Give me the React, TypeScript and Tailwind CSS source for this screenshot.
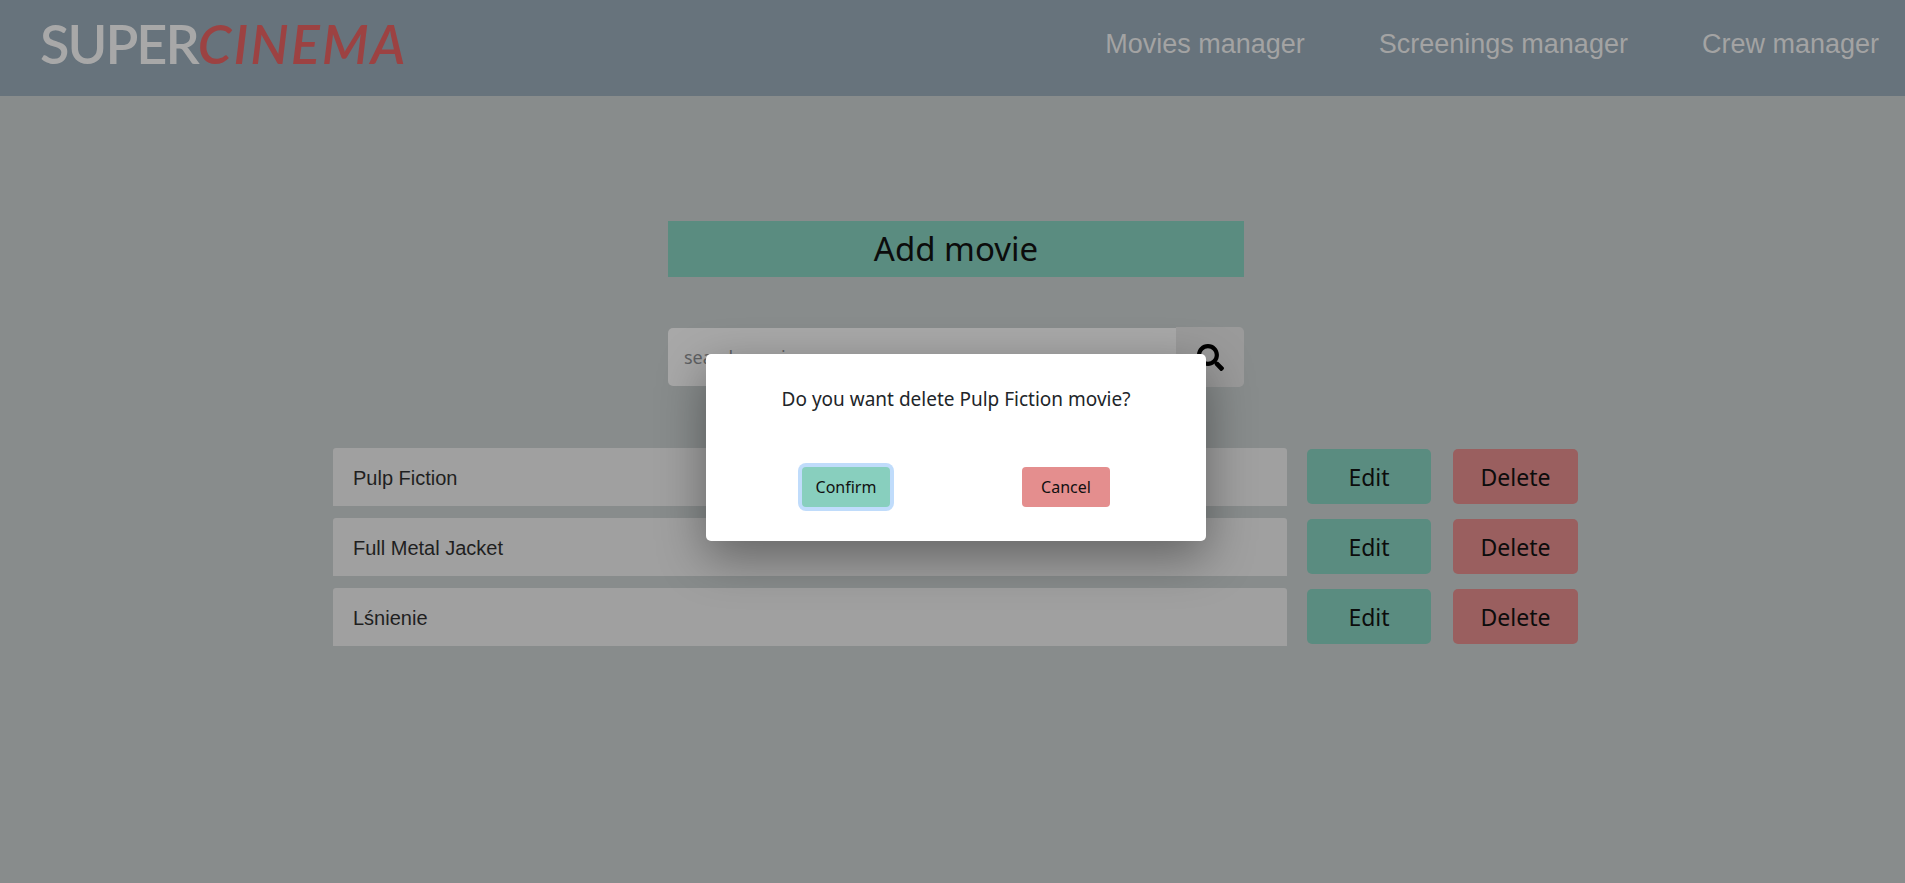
import { FaSearch } from "react-icons/fa"

const movies = ["Pulp Fiction", "Full Metal Jacket", "Lśnienie"]

function MovieRow({ title }: { title: string }) {
  return (
    <div className="flex items-start">
      <div className="flex h-[58px] w-[954px] items-center rounded-t-[3px] bg-[#a0a0a0] pt-[2px] pl-[20px] font-['Liberation_Sans',sans-serif] text-[20px] text-[#1f1f1f]">
        {title}
      </div>
      <button className="mt-px ml-5 h-[55px] w-[124px] rounded-[5px] bg-[#5a8c80] pt-[2px] text-[23px] text-[#0c0c0c]">
        Edit
      </button>
      <button className="mt-px ml-[22px] h-[55px] w-[125px] rounded-[5px] bg-[#9a5f5f] pt-[2px] text-[23px] text-[#0c0c0c]">
        Delete
      </button>
    </div>
  )
}

export default function App() {
  return (
    <div className="relative h-[883px] overflow-hidden bg-[#888c8c] font-['Noto_Sans','Open_Sans',sans-serif]">
      {/* Navbar */}
      <nav className="flex h-[96px] items-center justify-between bg-[#67737c] pr-[26px] pl-10">
        <div className="pb-2 font-['Comic_Sans_MS','Lato',sans-serif] text-[54px] leading-none font-semibold">
          <span className="tracking-[-2px] text-[#a8a8a8]">SUPER</span>
          <span className="tracking-[2px] text-[#9c4242] italic">CINEMA</span>
        </div>
        <div className="flex gap-[74px] pb-[7px] font-['Liberation_Sans',sans-serif] text-[27px] text-[#a3a3a3]">
          <a>Movies manager</a>
          <a>Screenings manager</a>
          <a>Crew manager</a>
        </div>
      </nav>

      {/* Movies */}
      <main className="flex flex-col items-center pt-[125px] pl-[6px]">
        <button className="ml-px h-[56px] w-[576px] bg-[#5a8c80] pb-[2px] text-[33px] leading-none text-[#0c0c0c]">
          Add movie
        </button>

        <div className="mt-[50px] ml-px flex h-[60px] w-[576px] items-center">
          <div className="flex h-[58px] flex-1 items-center rounded-l-[5px] bg-[#a8a8a8] pl-[16px] text-[18px] text-[#5f6163]">
            search movie
          </div>
          <div className="flex h-[60px] w-[68px] items-center justify-center rounded-r-[5px] bg-[#9a9a9a]">
            <FaSearch className="text-[27px] text-black" />
          </div>
        </div>

        <div className="mt-[61px] flex w-[1245px] flex-col gap-3">
          {movies.map((m) => (
            <MovieRow key={m} title={m} />
          ))}
        </div>
      </main>

      {/* Confirm dialog */}
      <div className="absolute top-[354px] left-[706px] flex h-[187px] w-[500px] flex-col items-center rounded-[5px] bg-white shadow-[0_16px_48px_rgba(0,0,0,0.38)]">
        <p className="mt-8 text-[19px] leading-[27px] text-[#212529]">
          Do you want delete Pulp Fiction movie?
        </p>
        <div className="mt-[54px] flex gap-[132px]">
          <button className="h-10 w-[88px] rounded-[4px] bg-[#88cfbe] text-[16px] text-[#111] ring-4 ring-[#c0dcfb]">
            Confirm
          </button>
          <button className="h-10 w-[88px] rounded-[4px] bg-[#e48e8e] text-[16px] text-[#111]">
            Cancel
          </button>
        </div>
      </div>
    </div>
  )
}
